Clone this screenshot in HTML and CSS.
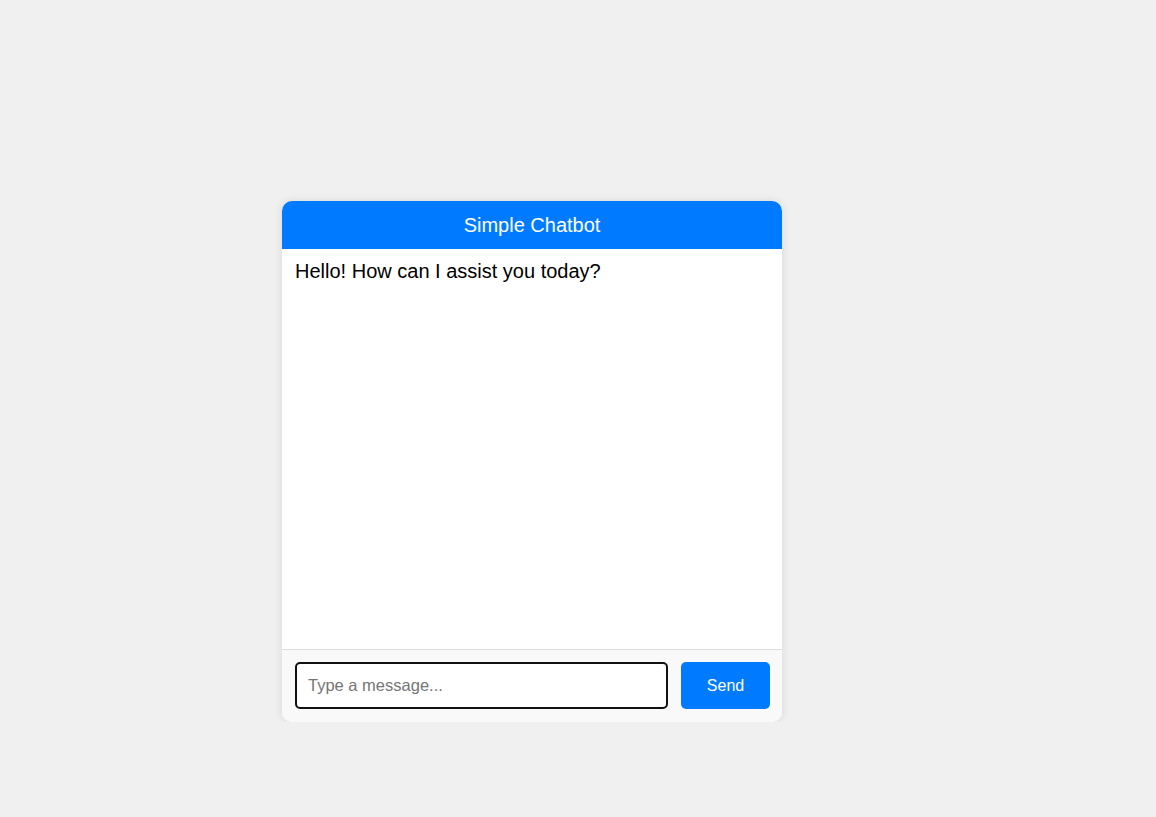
FILE: index.html
```html
<!DOCTYPE html>
<html lang="en">
<head>
<meta charset="utf-8">
<title>Simple Chatbot</title>
<link rel="stylesheet" href="styles.css">
</head>
<body>
<div class="page">
  <div class="chat">
    <div class="chat-header">Simple Chatbot</div>
    <div class="chat-messages">
      <div class="message">Hello! How can I assist you today?</div>
    </div>
    <div class="chat-input">
      <input class="input" type="text" placeholder="Type a message...">
      <button class="send">Send</button>
    </div>
  </div>
</div>
</body>
</html>
```
FILE: styles.css
```css
html, body {
  margin: 0;
  padding: 0;
  background: #f0f0f0;
  font-family: "Liberation Sans", Arial, sans-serif;
}
.page {
  padding: 201px 0 0 282px;
}
.chat {
  width: 500px;
  background: #fff;
  border-radius: 10px;
  overflow: hidden;
  box-shadow: 0 0 10px rgba(0, 0, 0, 0.1);
}
.chat-header {
  height: 48px;
  background: #007bff;
  color: #fff;
  font-size: 20px;
  display: flex;
  align-items: center;
  justify-content: center;
}
.chat-messages {
  height: 400px;
  box-sizing: border-box;
  padding: 11px 13px;
  background: #fff;
  font-size: 20px;
  color: #000;
}
.chat-input {
  display: flex;
  gap: 13px;
  padding: 12px 12px 13px 13px;
  background: #f9f9f9;
  border-top: 1px solid #ddd;
}
.input {
  flex: 1;
  height: 47px;
  box-sizing: border-box;
  border: 2px solid #111;
  border-radius: 5px;
  padding: 0 11px;
  font-family: "Liberation Sans", Arial, sans-serif;
  font-size: 16.5px;
  outline: none;
  background: #fff;
}
.input::placeholder {
  color: #757575;
}
.send {
  width: 89px;
  height: 47px;
  border: none;
  border-radius: 5px;
  background: #007bff;
  color: #fff;
  font-family: "Liberation Sans", Arial, sans-serif;
  font-size: 16px;
  cursor: pointer;
}
```
